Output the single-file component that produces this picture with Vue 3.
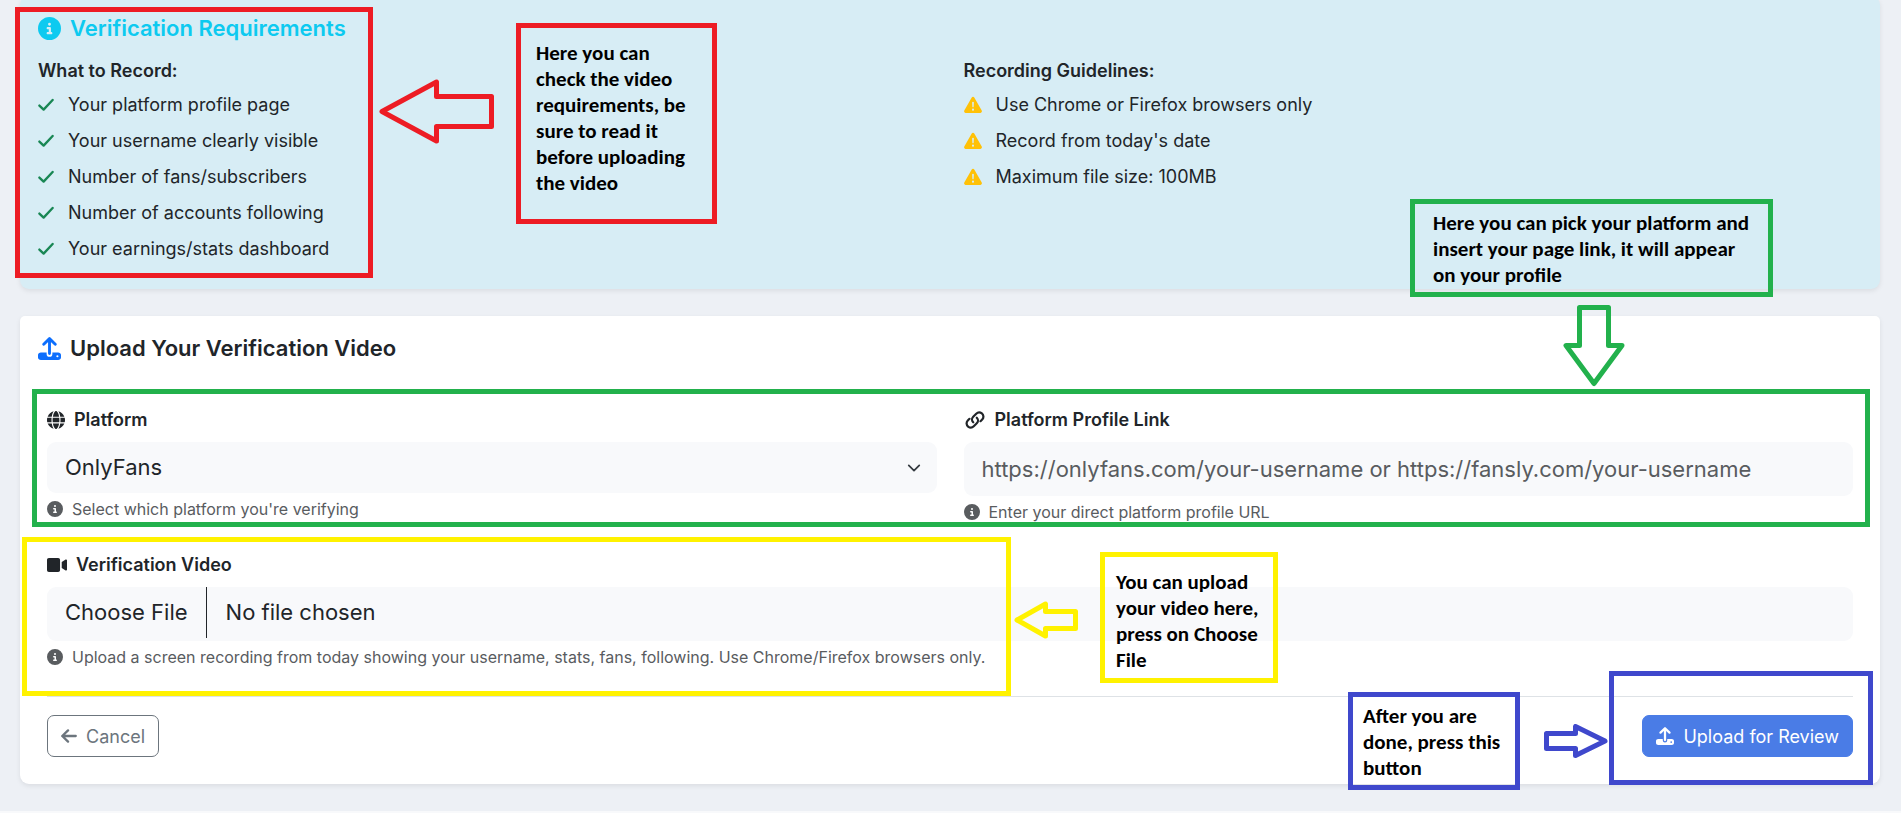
<script setup>
import { ref } from 'vue'

const recordItems = [
  'Your platform profile page',
  'Your username clearly visible',
  'Number of fans/subscribers',
  'Number of accounts following',
  'Your earnings/stats dashboard',
]
const guidelines = [
  'Use Chrome or Firefox browsers only',
  "Record from today's date",
  'Maximum file size: 100MB',
]
const platforms = ['OnlyFans', 'Fansly']
const platform = ref('OnlyFans')
const link = ref('')
const infoPath =
  'M256 512a256 256 0 1 0 0-512 256 256 0 1 0 0 512zM224 160a32 32 0 1 1 64 0 32 32 0 1 1-64 0zm-8 64h48c13.300 0 24 10.700 24 24v88h8c13.300 0 24 10.700 24 24s-10.700 24-24 24h-80c-13.300 0-24-10.700-24-24s10.700-24 24-24h24v-64h-24c-13.300 0-24-10.700-24-24s10.700-24 24-24z'
const trayPath =
  'M64 344h128v32a64 64 0 0 0 128 0v-32h128c35 0 64 21 64 56v56c0 35-29 56-64 56H64c-35 0-64-21-64-56v-56c0-35 29-56 64-56zM432 452a24 24 0 1 0 0-48 24 24 0 1 0 0 48z'
</script>

<template>
  <div class="page">
    <main class="content">
      <section class="card info-card">
        <h2 class="title info-title">
          <svg class="icon-lg" viewBox="0 0 512 512" aria-hidden="true"><path :d="infoPath" fill="currentColor" /></svg>
          Verification Requirements
        </h2>
        <div class="columns">
          <div>
            <h3 class="subtitle">What to Record:</h3>
            <ul class="list">
              <li v-for="item in recordItems" :key="item">
                <svg class="check" viewBox="0 0 448 512" aria-hidden="true">
                  <path d="M36 272L156 388L412 112" />
                </svg>
                {{ item }}
              </li>
            </ul>
          </div>
          <div>
            <h3 class="subtitle">Recording Guidelines:</h3>
            <ul class="list">
              <li v-for="item in guidelines" :key="item">
                <svg class="warn" viewBox="0 0 512 512" aria-hidden="true">
                  <path fill-rule="evenodd" d="M256 20c15 0 28 8 36 20l212 370c17 32-3 70-38 70H46c-35 0-55-38-38-70L220 40c8-12 21-20 36-20zM256 160c-15 0-26 12-25 26l7 120c1 22 35 22 36 0l7-120c1-14-10-26-25-26zM256 418a30 30 0 1 0 0-60 30 30 0 1 0 0 60z" />
                </svg>
                {{ item }}
              </li>
            </ul>
          </div>
        </div>
      </section>

      <section class="card form-card">
        <h2 class="title">
          <svg class="icon-lg upload-mark" viewBox="0 0 512 512" aria-hidden="true">
            <path :d="trayPath" fill="currentColor" fill-rule="evenodd" />
            <path class="arrow-up" d="M256 370V44M128 160L256 36L384 160" />
          </svg>
          Upload Your Verification Video
        </h2>
        <form class="form" @submit.prevent>
          <div class="columns">
            <div>
              <label class="label" for="platform">
                <svg class="icon" viewBox="0 0 512 512" aria-hidden="true">
                  <path fill="currentColor" d="M352 256c0 22.200-1.200 43.600-3.300 64H163.300c-2.200-20.400-3.300-41.800-3.300-64s1.200-43.600 3.300-64h185.400c2.200 20.400 3.300 41.800 3.300 64zm28.800-64h123.100c5.300 20.500 8.100 41.900 8.100 64s-2.800 43.500-8.100 64H380.800c2.100-20.600 3.200-42 3.200-64s-1.100-43.400-3.200-64zm112.600-32H376.700c-10-63.900-29.800-117.400-55.300-151.600 78.300 20.700 142 77.500 171.900 151.600zM344.300 160H167.700c6.100-36.400 15.500-68.600 27-94.700 10.500-23.600 22.200-40.700 33.500-51.500C239.400 3.200 248.700 0 256 0s16.600 3.200 27.800 13.800c11.300 10.800 23 27.900 33.500 51.500 11.600 26 20.900 58.200 27 94.700zM135.300 160H18.600C48.600 85.900 112.200 29.100 190.600 8.400 165.100 42.600 145.300 96.100 135.300 160zM8.100 192h123.100c-2.100 20.600-3.200 42-3.200 64s1.100 43.400 3.200 64H8.100C2.800 299.500 0 278.100 0 256s2.800-43.500 8.100-64zm186.600 254.600c-11.600-26-20.900-58.200-27-94.600h176.600c-6.100 36.400-15.500 68.600-27 94.600-10.500 23.600-22.200 40.700-33.500 51.500C272.600 508.800 263.300 512 256 512s-16.600-3.200-27.800-13.800c-11.300-10.800-23-27.900-33.500-51.600zM135.300 352c10 63.900 29.800 117.400 55.300 151.600C112.200 482.900 48.600 426.100 18.600 352h116.700zm358.100 0c-30 74.100-93.600 130.900-171.900 151.600 25.500-34.200 45.200-87.700 55.300-151.600h116.600z" />
                </svg>
                Platform
              </label>
              <div class="select-wrap">
                <select id="platform" v-model="platform" class="control select">
                  <option v-for="p in platforms" :key="p">{{ p }}</option>
                </select>
                <svg class="chevron" viewBox="0 0 16 16" aria-hidden="true"><path d="M2 5l6 6 6-6" /></svg>
              </div>
              <p class="help">
                <svg class="icon-sm" viewBox="0 0 512 512" aria-hidden="true"><path :d="infoPath" fill="currentColor" /></svg>
                Select which platform you're verifying
              </p>
            </div>
            <div>
              <label class="label" for="link">
                <svg class="icon-wide" viewBox="0 0 640 512" aria-hidden="true">
                  <path class="chain" d="M268 324C222 278 222 206 268 160L356 72C400 28 470 24 520 64C574 108 580 190 530 240L480 290" />
                  <path class="chain" d="M372 188C418 234 418 306 372 352L284 440C240 484 170 488 120 448C66 404 60 322 110 272L160 222" />
                </svg>
                Platform Profile Link
              </label>
              <input id="link" v-model="link" class="control" type="url" placeholder="https://onlyfans.com/your-username or https://fansly.com/your-username" />
              <p class="help">
                <svg class="icon-sm" viewBox="0 0 512 512" aria-hidden="true"><path :d="infoPath" fill="currentColor" /></svg>
                Enter your direct platform profile URL
              </p>
            </div>
          </div>
          <div>
            <label class="label" for="video">
              <svg class="icon-video" viewBox="0 0 576 512" aria-hidden="true">
                <path fill="currentColor" d="M56 56h264c35 0 56 21 56 56v288c0 35-21 56-56 56H56c-35 0-56-21-56-56V112c0-35 21-56 56-56zM536 100c18-10 40 0 40 20v272c0 20-22 30-40 20l-112-70V170z" />
              </svg>
              Verification Video
            </label>
            <input id="video" class="control file" type="file" accept="video/*" />
            <p class="help">
              <svg class="icon-sm" viewBox="0 0 512 512" aria-hidden="true"><path :d="infoPath" fill="currentColor" /></svg>
              Upload a screen recording from today showing your username, stats, fans, following. Use Chrome/Firefox browsers only.
            </p>
          </div>
          <div class="actions">
            <button type="button" class="btn btn-outline">
              <svg class="back" viewBox="0 0 448 512" aria-hidden="true"><path d="M416 256H36M196 96L32 256L196 416" /></svg>
              Cancel
            </button>
            <button type="submit" class="btn btn-primary">
              <svg class="icon upload-mark" viewBox="0 0 512 512" aria-hidden="true">
                <path :d="trayPath" fill="currentColor" fill-rule="evenodd" />
                <path class="arrow-up" d="M256 370V44M128 160L256 36L384 160" />
              </svg>
              Upload for Review
            </button>
          </div>
        </form>
      </section>
    </main>

    <div class="mark red frame-requirements"></div>
    <div class="mark green frame-fields"></div>
    <div class="mark yellow frame-video"></div>
    <div class="mark blue frame-submit"></div>

    <p class="mark red note note-requirements">Here you can<br />check the video<br />requirements, be<br />sure to read it<br />before uploading<br />the video</p>
    <p class="mark green note note-fields">Here you can pick your platform and<br />insert your page link, it will appear<br />on your profile</p>
    <p class="mark yellow note note-video">You can upload<br />your video here,<br />press on Choose<br />File</p>
    <p class="mark blue note note-submit">After you are<br />done, press this<br />button</p>

    <svg class="pointer red pointer-requirements" width="116" height="66" viewBox="0 0 116 66" aria-hidden="true">
      <path d="M3 32.500L57.500 3V17.500H112.500V47.500H57.500V62Z" />
    </svg>
    <svg class="pointer green pointer-fields" width="62" height="82" viewBox="0 0 62 82" aria-hidden="true">
      <path d="M31 78.500L3 40.500H16.500V2.500H45.500V40.500H59Z" />
    </svg>
    <svg class="pointer yellow pointer-video" width="64" height="38" viewBox="0 0 64 38" aria-hidden="true">
      <path d="M3 19L31.500 3V10.500H61.500V27.500H31.500V35Z" />
    </svg>
    <svg class="pointer blue pointer-submit" width="64" height="34" viewBox="0 0 64 34" aria-hidden="true">
      <path d="M61 17L31.500 2.500V9.500H2.500V24.500H31.500V31.500Z" />
    </svg>
  </div>
</template>

<style>
body {
  margin: 0;
  background: #f8f9fb;
}
</style>

<style scoped>
.page {
  position: relative;
  overflow: hidden;
  background: #edf0f5;
  color: #212529;
  font-family: Inter, "Liberation Sans", sans-serif;
  font-size: 18px;
  line-height: 27px;
}
.content {
  display: flex;
  flex-direction: column;
  gap: 27px;
  margin-top: -4px;
  padding: 0 21px 27px 20px;
}
h2, h3, p, ul {
  margin: 0;
  padding: 0;
}
svg {
  flex: none;
}
.card {
  border-radius: 9px;
  background: #fff;
  box-shadow: 0 2px 5px rgba(0, 0, 0, 0.08);
}
.info-card {
  padding: 18px 18px 27px;
  background: #d7edf5;
}
.form-card {
  padding-top: 18px;
  border-radius: 5px 5px 9px 9px;
}
.form-card .title {
  padding: 0 18px;
}
.title {
  display: flex;
  align-items: center;
  gap: 9px;
  font-size: 22px;
  font-weight: 600;
  line-height: 29px;
}
.info-title {
  margin-bottom: 14px;
  color: #0dcaf0;
}
.columns {
  display: grid;
  grid-template-columns: 1fr 1fr;
  gap: 27px;
}
.subtitle {
  font-size: 18px;
  font-weight: 600;
  line-height: 27px;
}
.list {
  display: flex;
  flex-direction: column;
  gap: 9px;
  margin-top: 7px;
  list-style: none;
}
.list li {
  display: flex;
  align-items: center;
  gap: 14px;
}
.icon-lg {
  width: 23px;
  height: 23px;
}
.icon {
  width: 18px;
  height: 18px;
}
.icon-wide {
  width: 22px;
  height: 18px;
}
.icon-video {
  width: 20px;
  height: 18px;
}
.icon-sm {
  width: 16px;
  height: 16px;
}
.check,
.back {
  width: 16px;
  height: 18px;
  fill: none;
  stroke: #198754;
  stroke-width: 66;
  stroke-linecap: round;
  stroke-linejoin: round;
}
.warn {
  width: 18px;
  height: 18px;
  fill: #ffc107;
}
.upload-mark {
  color: #0d6efd;
}
.arrow-up {
  fill: none;
  stroke: currentColor;
  stroke-width: 64;
  stroke-linecap: round;
  stroke-linejoin: round;
}
.chain {
  fill: none;
  stroke: currentColor;
  stroke-width: 64;
  stroke-linecap: round;
}
.form {
  display: flex;
  flex-direction: column;
  gap: 27px;
  padding: 43px 27px 27px;
}
.label {
  display: flex;
  align-items: center;
  gap: 9px;
  margin-bottom: 9px;
  font-weight: 600;
}
.control {
  display: block;
  box-sizing: border-box;
  width: 100%;
  height: 54px;
  padding: 0 18px;
  border: 0;
  border-radius: 9px;
  background: #f8f9fb;
  color: #212529;
  font: inherit;
  font-size: 22px;
}
.control::placeholder {
  color: #595c5f;
  opacity: 1;
}
.select-wrap {
  display: grid;
  align-items: center;
}
.select-wrap > * {
  grid-area: 1 / 1;
}
.select {
  height: 51px;
  appearance: none;
}
.chevron {
  justify-self: end;
  width: 14px;
  height: 14px;
  margin-right: 16px;
  fill: none;
  stroke: #343a40;
  stroke-width: 2;
  stroke-linecap: round;
  stroke-linejoin: round;
  pointer-events: none;
}
.file {
  padding: 0;
}
.file::file-selector-button {
  height: 51px;
  margin: 0 19px 0 0;
  padding: 0 18px;
  border: 0;
  border-right: 1px solid #212529;
  background: transparent;
  color: inherit;
  font: inherit;
}
.help {
  display: flex;
  align-items: center;
  gap: 9px;
  margin-top: 4px;
  color: #595c5f;
  font-size: 16px;
  line-height: 24px;
}
.actions {
  display: flex;
  justify-content: space-between;
  padding-top: 18px;
  border-top: 1px solid #dee2e6;
}
.btn {
  display: flex;
  align-items: center;
  gap: 9px;
  padding: 0 13px;
  height: 42px;
  border: 1px solid #6c757d;
  border-radius: 7px;
  background: #fff;
  color: #6c757d;
  font: inherit;
}
.btn-primary {
  border-color: #4a7ce6;
  background: #4a7ce6;
  color: #fff;
}
.btn-primary .upload-mark {
  color: #fff;
}
.back {
  stroke: currentColor;
}

/* Walkthrough annotations laid over the page */
.red { color: #ed1c24; }
.green { color: #22b14c; }
.yellow { color: #fff200; }
.blue { color: #3f48cc; }
.mark {
  position: absolute;
  box-sizing: border-box;
  border: 5px solid currentColor;
  pointer-events: none;
}
.note {
  font: 700 21px/26px Carlito, Lato, sans-serif;
  -webkit-text-fill-color: #000;
  white-space: nowrap;
}
.pointer {
  position: absolute;
  fill: none;
  stroke: currentColor;
  stroke-width: 5;
  stroke-linejoin: round;
}
.frame-requirements { left: 15px; top: 7px; width: 358px; height: 271px; }
.frame-fields { left: 32px; right: 31px; top: 389px; height: 138px; }
.frame-video { left: 22px; top: 537px; width: 989px; height: 159px; }
.frame-submit { right: 28px; top: 671px; width: 264px; height: 114px; }
.note-requirements { left: 516px; top: 23px; width: 201px; height: 201px; padding: 12px 15px; }
.note-fields { right: 128px; top: 199px; width: 363px; height: 98px; padding: 6px 18px; }
.note-video { left: 1100px; top: 552px; width: 178px; height: 131px; padding: 12px 11px; }
.note-submit { right: 381px; top: 692px; width: 172px; height: 98px; padding: 6px 10px; }
.pointer-requirements { left: 379px; top: 79px; }
.pointer-fields { right: 276px; top: 305px; }
.pointer-video { left: 1014px; top: 601px; }
.pointer-submit { right: 293px; top: 724px; }
</style>
